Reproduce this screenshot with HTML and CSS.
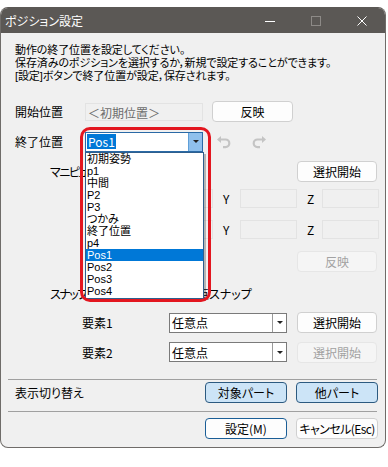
FILE: index.html
```html
<!DOCTYPE html>
<html lang="ja">
<head>
<meta charset="utf-8">
<link rel="stylesheet" href="styles.css">
</head>
<body>
<div class="window">
  <div class="titlebar">
    <span class="title">ポジション設定</span>
    <div class="controls">
      <span class="ctl"><svg width="12" height="12" viewBox="0 0 12 12"><path d="M1 6.5h10" stroke="#fff" stroke-width="1"/></svg></span>
      <span class="ctl"><svg width="12" height="12" viewBox="0 0 12 12"><rect x="1.5" y="1.5" width="9" height="9" fill="none" stroke="#8d8a87" stroke-width="1"/></svg></span>
      <span class="ctl"><svg width="12" height="12" viewBox="0 0 12 12"><path d="M1.5 1.5l9 9M10.5 1.5l-9 9" stroke="#fff" stroke-width="1"/></svg></span>
    </div>
  </div>
  <div class="content">
    <div class="desc">
      <p>動作の終了位置を設定してください。</p>
      <p>保存済みのポジションを選択するか，新規で設定することができます。</p>
      <p>[設定]ボタンで終了位置が設定，保存されます。</p>
    </div>

    <div class="row r-start">
      <span class="label w70">開始位置</span>
      <div class="field disabled w118">＜初期位置＞</div>
      <button class="btn ml9 w81">反映</button>
    </div>

    <div class="row r-end">
      <span class="label w70">終了位置</span>
      <div class="combo open">
        <span class="val"><span class="sel">Pos1</span></span>
        <span class="arr"><i class="tri"></i></span>
      </div>
      <span class="icon undo"><svg width="16" height="16" viewBox="0 0 16 16"><path d="M4 5.5h5.5a3.8 3.8 0 0 1 0 7.6H7" fill="none" stroke="#c4c4c4" stroke-width="2.2"/><path d="M1 5.5l4-3.6v7.2z" fill="#c4c4c4"/></svg></span>
      <span class="icon redo"><svg width="16" height="16" viewBox="0 0 16 16"><path d="M12 5.5H6.5a3.8 3.8 0 0 0 0 7.6H9" fill="none" stroke="#c4c4c4" stroke-width="2.2"/><path d="M15 5.5l-4-3.6v7.2z" fill="#c4c4c4"/></svg></span>
    </div>

    <div class="row r-mani">
      <span class="label ind35 clipped">マニピュ</span>
      <button class="btn w80 push">選択開始</button>
    </div>

    <div class="row r-xyz1">
      <span class="ax ax-x"></span><div class="field disabled w57"></div>
      <span class="ax ax-y">Y</span><div class="field disabled w57"></div>
      <span class="ax ax-z">Z</span><div class="field disabled w57"></div>
    </div>

    <div class="row r-xyz2">
      <span class="ax ax-x"></span><div class="field disabled w57"></div>
      <span class="ax ax-y">Y</span><div class="field disabled w57"></div>
      <span class="ax ax-z">Z</span><div class="field disabled w57"></div>
    </div>

    <div class="row r-apply">
      <button class="btn w80 push disabled-btn">反映</button>
    </div>

    <div class="row r-snap">
      <span class="label ind35 snaplabel clipped">スナップ</span>
      <span class="radio r1"></span><span class="rspace"></span>
      <span class="radio r2"></span><span class="rtext">頂点スナップ</span>
    </div>

    <div class="row r-el1">
      <span class="label el">要素1</span>
      <div class="combo">
        <span class="val">任意点</span>
        <span class="arr"><i class="tri"></i></span>
      </div>
      <button class="btn w80 push">選択開始</button>
    </div>

    <div class="row r-el2">
      <span class="label el">要素2</span>
      <div class="combo">
        <span class="val">任意点</span>
        <span class="arr"><i class="tri"></i></span>
      </div>
      <button class="btn w80 push disabled-btn">選択開始</button>
    </div>

    <div class="sep s1"></div>

    <div class="row r-view">
      <span class="label">表示切り替え</span>
      <button class="btn toggle w82 first">対象パート</button>
      <button class="btn toggle w82 second">他パート</button>
    </div>

    <div class="sep s2"></div>

    <div class="row r-bottom">
      <button class="btn default w82 first">設定(M)</button>
      <button class="btn w82 second tight">キャンセル(Esc)</button>
    </div>
  </div>

  <ul class="droplist">
    <li>初期姿勢</li>
    <li>p1</li>
    <li>中間</li>
    <li>P2</li>
    <li>P3</li>
    <li>つかみ</li>
    <li>終了位置</li>
    <li>p4</li>
    <li class="selected">Pos1</li>
    <li>Pos2</li>
    <li>Pos3</li>
    <li>Pos4</li>
  </ul>
  <div class="highlight"></div>
</div>
</body>
</html>
```

FILE: styles.css
```css
* { box-sizing: border-box; margin: 0; padding: 0; }

body {
  background: #ffffff;
  font-family: "Noto Sans CJK JP", "Noto Sans", sans-serif;
  font-size: 12px;
  color: #000;
  font-feature-settings: "palt";
}

.window {
  position: relative;
  margin-top: 7px;
  width: 386px;
  height: 441px;
  border: 1px solid #6f6c69;
  border-top-color: #5b5855;
  border-radius: 8px;
  background: #f0f0f0;
  overflow: hidden;
}

.titlebar {
  height: 25px;
  background: #5b5855;
  display: flex;
  align-items: center;
  color: #fff;
}

.title {
  padding-left: 4px;
  font-size: 12px;
  line-height: 25px;
}

.controls {
  margin-left: auto;
  display: flex;
  height: 25px;
}

.ctl {
  width: 46px;
  display: flex;
  align-items: center;
  justify-content: center;
}

.content {
  padding: 0 8px 0 14px;
}

.desc {
  padding-top: 11px;
  line-height: 13px;
  font-family: "Liberation Sans", "Noto Sans CJK JP", sans-serif;
  font-size: 11px;
  letter-spacing: -0.1px;
  white-space: nowrap;
}

.row {
  display: flex;
  align-items: center;
}

.label { white-space: nowrap; }
.clipped { letter-spacing: -1.5px; }
.w70 { width: 70px; flex: none; }
.ind35 { margin-left: 35px; }
.el { margin-left: 67px; width: 87px; flex: none; }

.r-start { margin-top: 18px; height: 21px; }
.r-end { margin-top: 9px; height: 21px; }
.r-mani { margin-top: 9px; height: 21px; }
.r-xyz1 { margin-top: 7px; height: 19px; }
.r-xyz2 { margin-top: 12px; height: 19px; }
.r-apply { margin-top: 12px; height: 20px; }
.r-snap { margin-top: 12px; height: 20px; }
.r-el1 { margin-top: 9px; height: 21px; }
.r-el2 { margin-top: 9px; height: 20px; }
.r-view { margin-top: 2px; height: 21px; }
.r-bottom { margin-top: 6px; height: 21px; }

.field {
  height: 19px;
  border: 1px solid #e3e3e3;
  background: #f0f0f0;
  flex: none;
}
.field.disabled { color: #6d6d6d; padding-left: 2px; line-height: 17px; }
.w118 { width: 118px; }
.w57 { width: 57px; }
.r-start .field { height: 18px; }

.btn {
  font: inherit;
  font-feature-settings: "palt";
  height: 21px;
  border: 1px solid #d0d0d0;
  border-radius: 4px;
  background: #fdfdfd;
  color: #000;
  flex: none;
  white-space: nowrap;
}
.tight { letter-spacing: -0.6px; padding: 0; }
.w80 { width: 80px; }
.w81 { width: 81px; }
.w82 { width: 82px; }
.ml9 { margin-left: 9px; }
.push { margin-left: auto; }

.disabled-btn {
  background: #f5f5f5;
  border-color: #e6e6e6;
  color: #a2a2a2;
}

.toggle {
  background: #cce4f7;
  border-color: #2c5a80;
}
.default {
  border-color: #1b5e96;
}
.first { margin-left: auto; margin-right: 9px; }
.second { margin-right: -1px; }

.combo {
  display: flex;
  width: 118px;
  height: 20px;
  border: 1px solid #7a7a7a;
  background: #fff;
  flex: none;
}
.combo .val {
  flex: 1;
  padding-left: 2px;
  display: flex;
  align-items: center;
}
.combo .arr {
  width: 14px;
  border-left: 1px solid #9a9a9a;
  display: flex;
  align-items: center;
  justify-content: center;
}
.tri {
  display: block;
  width: 0;
  height: 0;
  border-left: 3px solid transparent;
  border-right: 3px solid transparent;
  border-top: 3px solid #222;
}

.combo.open {
  border-color: #2a6aa6;
}
.combo.open .val { padding-left: 1px; }
.combo.open .arr {
  background: #8fc0ec;
  border-left-color: #5f9fd8;
}
.sel {
  background: #0078d7;
  color: #fff;
  padding: 0 1px;
  line-height: 15px;
}

.icon { display: flex; width: 16px; flex: none; }
.undo { margin-left: 13px; }
.redo { margin-left: 19px; }

.ax { flex: none; }
.ax-x { margin-left: 124px; width: 17px; }
.ax-y { margin-left: 10px; width: 17px; }
.ax-z { margin-left: 10px; width: 15px; }

.snaplabel { width: 40px; flex: none; }
.radio {
  width: 12px;
  height: 12px;
  border: 1px solid #333;
  border-radius: 50%;
  background: #fff;
  flex: none;
}
.r1 { margin-left: 8px; }
.rspace { width: 60px; flex: none; }
.rtext { margin-left: 3px; white-space: nowrap; }

.sep {
  height: 1px;
  background: #a0a0a0;
  margin-left: -7px;
  width: 369px;
}
.s1 { margin-top: 17px; }
.s2 { margin-top: 8px; }

.droplist {
  position: absolute;
  left: 84px;
  top: 144px;
  width: 119px;
  list-style: none;
  background: #fff;
  border: 1px solid #2e5f8e;
  box-shadow: 2px 2px 0 rgba(0,0,0,0.25);
  padding: 0 0 1px 0;
  font-family: "Liberation Sans", "Noto Sans CJK JP", sans-serif;
}
.droplist li {
  height: 12px;
  line-height: 12px;
  font-size: 11px;
  padding-left: 1px;
  white-space: nowrap;
}
.droplist li.selected {
  background: #0078d7;
  color: #fff;
}

.highlight {
  position: absolute;
  left: 79px;
  top: 119px;
  width: 131px;
  height: 175px;
  border: 3px solid #e3161f;
  border-radius: 10px;
}
```
